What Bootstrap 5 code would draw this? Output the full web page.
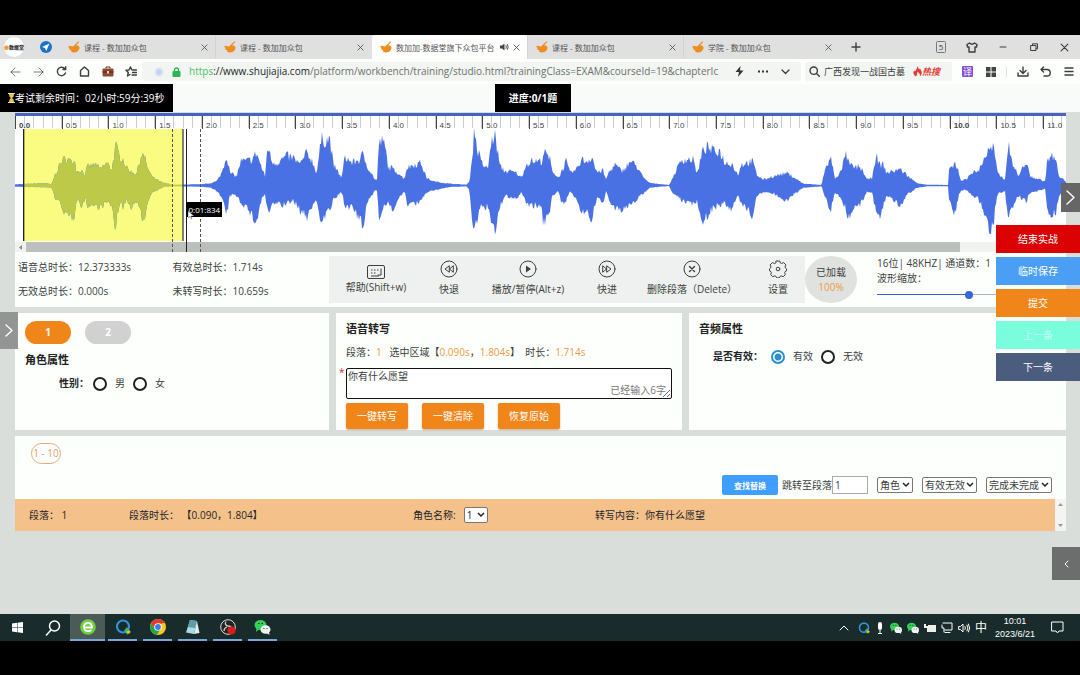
<!DOCTYPE html>
<html lang="zh-CN">
<head>
<meta charset="utf-8">
<meta name="viewport" content="width=device-width, initial-scale=1">
<title>数加加-数据堂旗下众包平台</title>
<link href="https://cdn.jsdelivr.net/npm/bootstrap@5.3.0/dist/css/bootstrap.min.css" rel="stylesheet">
<style>
:root{--ink:#3c3f3e;--orange:#f08519;--page:#dadedb;--panel:#fdfffd}
body{background:#000;color:var(--ink);font:10px/15px "Open Sans","Noto Sans CJK SC",sans-serif;min-height:100vh;padding:35px 0 34px;overflow-x:hidden}
svg{display:block;flex:none}
button,input,select,textarea{font-family:inherit;font-size:10px;line-height:15px;color:inherit}
button{border:0;background:none;padding:0}
a{color:inherit;text-decoration:none}
.ln{fill:none;stroke:currentColor;stroke-width:1.4;stroke-linecap:round;stroke-linejoin:round}
.thin{stroke-width:1}
/* browser chrome */
.tabstrip{background:#dfe0df;height:24px}
.strip-start{width:60px}
.site-logo{width:20px;height:20px;background:#fff;border-radius:50%;font-size:5px;font-weight:800;line-height:20px;color:#333;text-align:center;white-space:nowrap}
.tab-item{flex:0 1 156px;min-width:0;font-size:8px;padding:0 8px;color:#555}
.tab-item+.tab-item{box-shadow:-1px 0 0 #d2d4d2}
.tab-item.current{background:#fff;border-radius:4px 4px 0 0;box-shadow:none}
.win-btn{width:31px;height:24px}
.toolrow{background:var(--panel);height:25px}
.slot{width:23px;height:24px}
.field{background:#f2f5f2;height:19px;border-radius:2px;min-width:0}
.url{width:100%;min-width:0;white-space:nowrap;overflow:hidden;color:#6c706e}
.searchfield{width:147px;font-size:9px}
/* page */
.workspace{background:var(--page)}
.topband{background:#f8fbfa;height:28px}
.blackbox{background:#000;color:#fff;height:28px}
.progressbox{left:0;right:0;margin:0 auto;width:76px;top:0;transform:translateX(-7px)}
.stack{padding:1px 14px 0 15px;gap:6px}
.panel{background:var(--panel)}
.pad-x{padding-left:10px;padding-right:10px}
.ruler{height:13px;background:#fff}
.tick{flex:0 0 4.448%;border-left:1px solid #444;font:8px/8px "Liberation Sans",sans-serif;padding:6px 0 0 3px;color:#444;background:repeating-linear-gradient(90deg,transparent 0 calc(20% - 1px),#c9cbd0 calc(20% - 1px) 20%) 0 0/100% 12px no-repeat}
.wavebox{border-top:3px solid #4662c4}
.wave{width:100%;height:113px}
.hscroll{height:10px;background:#f0f2f0;padding:0 106px 0 11px}
.hthumb{background:#bcc0bd;height:10px}
.hleft{left:4px;top:3px}
.mark-line{top:13px;bottom:0;width:0;border-left:1px solid #222}
.mark-line.dotted{border-left-style:dashed;border-left-color:#555}
.timetip{background:#000;color:#fff;font-size:8px;line-height:15px;width:36px;height:15px;left:16.3%;top:86px;white-space:nowrap;text-align:center}
.cursor{left:2px;top:9px}
.inforow{display:grid;grid-template-columns:314fr 476fr 52px 209fr;height:55px;padding:4px 0}
.stats{display:grid;grid-template-columns:155fr 157fr;padding-left:3px}
.tools{background:#eef1ef;height:47px;display:grid;grid-template-columns:94fr 52fr 106fr 52fr 118fr 54fr}
.tools button{height:47px;min-width:0}
.loaded{background:#e0e2e0;border-radius:50%;height:47px}
.format{padding-left:20px}
.o{color:#eb9a45}
.zoomrange{appearance:none;height:9px;width:140px;background:linear-gradient(90deg,#3a62c8 93px,#aab4cc 93px) 0 4px/100% 1px no-repeat;display:block}
.zoomrange::-webkit-slider-thumb{appearance:none;width:8px;height:8px;border-radius:50%;background:#3565d8}
.cards{display:grid;grid-template-columns:minmax(0,314fr) minmax(0,346fr) minmax(0,377fr);gap:7px}
.cards>section{height:117px}
.pill{width:46px;height:23px;border-radius:12px;background:#d0d1d0;color:#fff;font-weight:700}
.pill.on{background:var(--orange)}
.btn-gap{gap:14px}
h2{font-size:11px;line-height:16px;font-weight:700;margin:0;color:#222}
.attr{margin-left:34px}
.attr-wide{margin-left:14px}
.rd{appearance:none;width:14px;height:14px;border:2px solid #222;border-radius:50%;margin:0;flex:none;background:#fff}
.rd:checked{border-color:#2a91cc;background:radial-gradient(circle,#2a91cc 0 3px,#fff 4px)}
.transcript{width:100%;height:31px;border:1px solid #111;border-radius:2px;outline:0;padding:0 1px;display:block;background:#fff;overflow:hidden}
.counter{right:6px;bottom:1px;color:#777}
.star{left:-7px;top:-3px;color:#c33}
.act{width:62px;height:26px;background:var(--orange);color:#fff;border-radius:2px;box-shadow:0 1px 2px #a86a}
.rangechip{width:30px;height:21px;border:1px solid #e5a97c;border-radius:11px;color:#dd9d6d;white-space:nowrap;line-height:19px;text-align:center}
.find{width:56px;height:20px;background:#409eff;color:#fff;border-radius:2px;font-size:8px;font-weight:700}
.jump{width:36px;height:18px;border:1px solid #aaa;padding:0 2px;background:#fff}
.filters{gap:9px;padding-right:14px}
.sel{appearance:none;height:16px;line-height:14px;border:1px solid #777;border-radius:2px;padding:0 2px;background:#fff url("data:image/svg+xml,%3Csvg xmlns='http://www.w3.org/2000/svg' viewBox='0 0 8 6'%3E%3Cpath d='M1 1l3 3 3-3' fill='none' stroke='%23222' stroke-width='1.5'/%3E%3C/svg%3E") right 2px center/8px 6px no-repeat}
.s1{width:36px}.s2{width:55px}.s3{width:66px}.s4{width:24px}
.listcard{height:63px;padding:7px 0 4px}
.segrow{background:#f5c18b;display:grid;grid-template-columns:100fr 284fr 182fr 460fr 11px;height:32px;padding-left:14px}
.vscroll{background:#f3f4f3;height:32px;padding:4px 0}
/* overlays */
.sideacts{right:0;top:141px;width:84px;gap:4px}
.sideacts button{height:28px;color:#fff;width:100%}
.edge{background:#666;color:#fff}
.edge-l{left:0;top:228px;width:18px;height:37px;background:#929593}
.edge-r{right:0;top:99px;width:19px;height:29px}
.edge-b{right:0;top:463px;width:28px;height:33px;background:#6b6e6c}
/* desktop taskbar */
.taskbar{background:#1a2b2b;height:27px;color:#fff}
.app{width:35px;height:27px;padding:0 3px}
.app span{border-bottom:2px solid #76a9d8;width:29px;height:27px}
.app.live{background:#4c5b58;padding:0}
.app.live span{width:35px}
.tray{gap:5px;padding-right:16px}
.ime{font-size:12px}
.clock{font:9px/13px "Liberation Sans",sans-serif;text-align:center;width:46px}
</style>
</head>
<body class="d-flex flex-column">
<svg width="0" height="0" class="position-absolute" aria-hidden="true"><defs>
<symbol id="hand" viewBox="0 0 12 12"><path fill="#f08c1c" d="M11.500.8 8 4.300Q10.500 4 11.500 6 11.500 9.500 8.500 11 5.500 12.200 3 10.500L3.200 9.200 1 8.300 1.500 7 .2 5.800 1 4.800 5 5.500 10.200.5z"/></symbol>
<symbol id="close" viewBox="0 0 8 8"><path class="ln thin" d="M1 1l6 6M7 1 1 7"/></symbol>
<symbol id="wechat" viewBox="0 0 16 16"><ellipse cx="6" cy="6" rx="6" ry="5" fill="#34d058"/><path d="M2 9 1.500 13 5 10z" fill="#34d058"/><ellipse cx="11" cy="10.500" rx="5" ry="4.300" fill="#eef4ef"/><path d="m12 14 3 2-.5-3z" fill="#eef4ef"/><path d="M3.500 4.500h1.500M7 4.500h1.500M9 9.500h1M12 9.500h1" stroke="#1a2b2b"/></symbol>
<symbol id="qbird" viewBox="0 0 16 16"><circle cx="8" cy="7.500" r="6" fill="none" stroke="#3092df" stroke-width="2.200"/><path d="M9 11.500 12 8l2 3 2 1.500-3 2-1 1.500-1-2.500z" fill="#35b568"/><path d="M11 13l3-2 1.500 2.500-2 1.500z" fill="#f2b431"/></symbol>
</defs></svg>

<header class="tabstrip d-flex">
  <div class="strip-start d-flex align-items-center flex-shrink-0 ps-1">
    <div class="site-logo"><span class="o">●</span>数据堂</div>
    <svg class="ms-3" width="12" height="12" viewBox="0 0 12 12"><circle cx="6" cy="6" r="6" fill="#1d72c8"/><path d="M9.500 2.500 2 6l3 1 1.200 3z" fill="#fff"/></svg>
  </div>
  <a href="#" class="tab-item d-flex align-items-center"><svg width="12" height="12"><use href="#hand"/></svg><span class="ms-1 flex-grow-1 text-nowrap">课程 - 数加加众包</span><svg width="7" height="7"><use href="#close"/></svg></a>
  <a href="#" class="tab-item d-flex align-items-center"><svg width="12" height="12"><use href="#hand"/></svg><span class="ms-1 flex-grow-1 text-nowrap">课程 - 数加加众包</span><svg width="7" height="7"><use href="#close"/></svg></a>
  <a href="#" class="tab-item current d-flex align-items-center"><svg width="12" height="12"><use href="#hand"/></svg><span class="ms-1 flex-grow-1 text-nowrap">数加加-数据堂旗下众包平台</span><svg class="mx-1" width="9" height="8" viewBox="0 0 9 8"><path d="M0 2.500h2L4.500.5v7L2 5.500H0z" fill="#444"/><path class="ln thin" d="M6 2.500q1 1.500 0 3M7.500 1.500q1.500 2.500 0 5"/></svg><svg width="7" height="7"><use href="#close"/></svg></a>
  <a href="#" class="tab-item d-flex align-items-center"><svg width="12" height="12"><use href="#hand"/></svg><span class="ms-1 flex-grow-1 text-nowrap">课程 - 数加加众包</span><svg width="7" height="7"><use href="#close"/></svg></a>
  <a href="#" class="tab-item d-flex align-items-center"><svg width="12" height="12"><use href="#hand"/></svg><span class="ms-1 flex-grow-1 text-nowrap">学院 - 数加加众包</span><svg width="7" height="7"><use href="#close"/></svg></a>
  <button class="win-btn d-flex align-items-center justify-content-center" aria-label="新建标签"><svg width="10" height="10" viewBox="0 0 10 10"><path class="ln" d="M5 1v8M1 5h8"/></svg></button>
  <div class="d-flex ms-auto align-items-center">
    <button class="win-btn d-flex align-items-center justify-content-center"><svg width="10" height="12" viewBox="0 0 10 12"><rect x=".5" y=".5" width="9" height="11" rx="1" fill="none" stroke="#777"/><text x="5" y="9" font-size="8" text-anchor="middle" fill="#444">5</text></svg></button>
    <button class="win-btn d-flex align-items-center justify-content-center" aria-label="皮肤"><svg width="12" height="11" viewBox="0 0 12 11"><path class="ln" d="M3.500 1 1 2.500 1.500 5H3v5h6V5h1.500L11 2.500 8.500 1Q6 3.500 3.500 1z"/></svg></button>
    <button class="win-btn d-flex align-items-center justify-content-center" aria-label="最小化"><svg width="8" height="8" viewBox="0 0 8 8"><path class="ln thin" d="M1 4h6"/></svg></button>
    <button class="win-btn d-flex align-items-center justify-content-center" aria-label="还原"><svg width="8" height="8" viewBox="0 0 8 8"><path class="ln thin" d="M1 2.500h5v5H1zM2.500 2.500V.8h5v5H6"/></svg></button>
    <button class="win-btn d-flex align-items-center justify-content-center" aria-label="关闭"><svg width="9" height="9"><use href="#close"/></svg></button>
  </div>
</header>

<nav class="toolrow d-flex align-items-center" aria-label="浏览器工具栏">
  <div class="d-flex ps-1 flex-shrink-0">
    <button class="slot d-flex align-items-center justify-content-center text-black-50" aria-label="后退"><svg width="11" height="10" viewBox="0 0 11 10"><path class="ln thin" d="M10 5H1M5 1 1 5l4 4"/></svg></button>
    <button class="slot d-flex align-items-center justify-content-center text-black-50" aria-label="前进"><svg width="11" height="10" viewBox="0 0 11 10"><path class="ln thin" d="M1 5h9M6 1l4 4-4 4"/></svg></button>
    <button class="slot d-flex align-items-center justify-content-center" aria-label="刷新"><svg width="11" height="11" viewBox="0 0 11 11"><path class="ln" d="M9.500 7A4.200 4.200 0 1 1 9 3M9.700.8V3.500H7"/></svg></button>
    <button class="slot d-flex align-items-center justify-content-center" aria-label="主页"><svg width="11" height="11" viewBox="0 0 11 11"><path class="ln" d="M1.500 4.500 5.500 1l4 3.500V10h-8z"/></svg></button>
    <button class="slot d-flex align-items-center justify-content-center" aria-label="工具箱"><svg width="12" height="11" viewBox="0 0 12 11"><path d="M4 2.500V1h4v1.500" fill="none" stroke="#6b3322"/><rect x=".5" y="2.500" width="11" height="8" rx="1" fill="#8a4a32"/><path d="M.5 6h11" stroke="#562718"/><rect x="5" y="5" width="2" height="2.500" fill="#e8d8c0"/></svg></button>
    <button class="slot d-flex align-items-center justify-content-center" aria-label="收藏"><svg width="12" height="11" viewBox="0 0 12 11"><path class="ln" d="M7 4 5.500 1 4 4 1 4.300l2.300 2.200L2.500 10 5 8.500M8 4h3.500M7.500 6.500h4M7 9h4.500"/></svg></button>
  </div>
  <div class="field d-flex align-items-center flex-grow-1 ps-2 pe-1 me-1">
    <svg class="ms-1" width="10" height="10" viewBox="0 0 10 10"><circle cx="5" cy="5" r="4.500" fill="#dbe4f6"/><circle cx="5" cy="5" r="2.500" fill="#c3d1f2"/></svg>
    <svg class="ms-2 me-2" width="9" height="10" viewBox="0 0 9 10"><path d="M2.500 5V3a2 2 0 0 1 4 0v2" fill="none" stroke="#2fb455" stroke-width="1.400"/><rect x=".5" y="4" width="8" height="6" rx="1" fill="#2fb455"/></svg>
    <a href="#" class="url"><span style="color:#4cc26a">https</span><span class="text-dark">://www.shujiajia.com</span>/platform/workbench/training/studio.html?trainingClass=EXAM&amp;courseId=19&amp;chapterIc</a>
    <button class="slot d-flex align-items-center justify-content-center flex-shrink-0" aria-label="加速"><svg width="9" height="11" viewBox="0 0 9 11"><path d="M5.500 0 .5 6H4L3 11l5.500-6.500H5z" fill="#333"/></svg></button>
    <button class="slot d-flex align-items-center justify-content-center flex-shrink-0" aria-label="更多"><svg width="10" height="3" viewBox="0 0 10 3"><path d="M0 .5h2v2H0zM4 .5h2v2H4zM8 .5h2v2H8z" fill="#333"/></svg></button>
    <button class="slot d-flex align-items-center justify-content-center flex-shrink-0" aria-label="展开"><svg width="9" height="6" viewBox="0 0 9 6"><path class="ln" d="M1 1l3.500 3.500L8 1"/></svg></button>
  </div>
  <div class="field searchfield d-flex align-items-center flex-shrink-0 ps-1">
    <svg width="11" height="11" viewBox="0 0 11 11"><circle class="ln" cx="4.700" cy="4.700" r="3.700"/><path class="ln" d="M7.500 7.500 10.300 10.300"/></svg>
    <a href="#" class="ms-1 text-nowrap">广西发现一战国古墓</a>
    <svg class="ms-2" width="9" height="11" viewBox="0 0 9 11"><path d="M4.500 0q.5 3 2 3.500L7 2.500q3 4 1 6.500L7 10.500Q7 7 4.500 5.500 4 9 3 10.500-1 8 1 4.500L2 5.500Q4 3 4.500 0z" fill="#e33b35"/></svg>
    <a href="#" class="fw-bold fst-italic" style="color:#e33b35">热搜</a>
  </div>
  <div class="d-flex align-items-center flex-shrink-0 ms-1">
    <button class="slot d-flex align-items-center justify-content-center"><svg width="11" height="11" viewBox="0 0 11 11"><rect width="11" height="11" rx="1" fill="#8650d6"/><text x="5.500" y="9" font-size="9" text-anchor="middle" fill="#fff">译</text></svg></button>
    <button class="slot d-flex align-items-center justify-content-center" aria-label="扩展"><svg width="10" height="10" viewBox="0 0 10 10"><path d="M0 0h4.500v4.500H0zM5.500 0H10v4.500H5.500zM0 5.500h4.500V10H0zM5.500 5.500H10V10H5.500z" fill="#444"/></svg></button>
    <span class="border-start ms-1 me-1" style="height:10px"></span>
    <button class="slot d-flex align-items-center justify-content-center" aria-label="下载"><svg width="12" height="11" viewBox="0 0 12 11"><path class="ln" d="M6 1v6M3 4.500 6 7.500l3-3M1 7v3h10V7"/></svg></button>
    <button class="slot d-flex align-items-center justify-content-center" aria-label="撤销"><svg width="11" height="11" viewBox="0 0 11 11"><path class="ln" d="M3.500 1 1 3.500 3.500 6M1 3.500h6a3 3 0 0 1 0 6.500H4"/></svg></button>
    <button class="slot d-flex align-items-center justify-content-center" aria-label="菜单"><svg width="10" height="9" viewBox="0 0 10 9"><path class="ln" d="M1 1h8M1 4.500h8M1 8h8"/></svg></button>
  </div>
</nav>

<main class="workspace position-relative flex-grow-1">
  <div class="topband position-relative">
    <div class="blackbox d-inline-flex align-items-center px-2">
      <svg width="7" height="10" viewBox="0 0 7 10"><path d="M0 .5h7M0 9.500h7" stroke="#e9d9a5"/><path d="M1 1h5q0 3-2 4 2 1 2 4H1q0-3 2-4-2-1-2-4z" fill="#e8c64b"/></svg><span class="text-nowrap">考试剩余时间：02小时:59分:39秒</span>
    </div>
    <div class="blackbox progressbox position-absolute d-flex align-items-center justify-content-center fw-bold">进度:0/1题</div>
  </div>

  <div class="stack d-flex flex-column">
    <div class="panel">
      <div class="wavebox position-relative">
        <div class="ruler d-flex overflow-hidden" id="ruler"></div>
        <svg class="wave" id="wave" viewBox="0 0 3153 339" preserveAspectRatio="none" role="img" aria-label="语音波形">
          <defs><clipPath id="selClip"><rect x="26" y="0" width="478" height="339"/></clipPath></defs>
          <rect width="3153" height="339" fill="#fff"/>
          <rect x="26" width="478" height="336" fill="#f9fc80"/>
          <path id="waveBlue" fill="#4a71e3"/>
          <rect x="26" y="165" width="478" height="10" fill="#f9fc80"/>
          <path id="waveSel" fill="#bdc948" clip-path="url(#selClip)"/>
          <rect x="24" width="4" height="336" fill="#222"/><rect x="502" width="4" height="336" fill="#444"/>
        </svg>
        <div class="hscroll position-relative"><svg class="hleft position-absolute" width="3" height="5" viewBox="0 0 3 5"><path d="M3 0 0 2.500 3 5z" fill="#888"/></svg><div class="hthumb"></div></div>
        <div class="mark-line dotted position-absolute" style="left:14.900%"></div>
        <div class="mark-line position-absolute" style="left:16.300%"></div>
        <div class="mark-line dotted position-absolute" style="left:17.600%"></div>
        <div class="timetip position-absolute">0:01:834<svg class="cursor position-absolute" width="6" height="9" viewBox="0 0 6 9"><path d="M0 0v7l2-1.500L3 8l1-.5L3 5h3z" fill="#fff" stroke="#333" stroke-width=".4"/></svg></div>
      </div>
      <div class="inforow">
        <div class="stats text-nowrap">
          <div class="pt-1">语音总时长：12.373333s</div><div class="pt-1">有效总时长：1.714s</div>
          <div class="pt-1">无效总时长：0.000s</div><div class="pt-1">未转写时长：10.659s</div>
        </div>
        <div class="tools text-nowrap">
          <button class="d-flex flex-column align-items-center pt-2"><svg width="18" height="16" viewBox="0 0 18 16"><rect class="ln thin" x=".5" y="1.500" width="17" height="13" rx="1.500"/><path d="M4 6h1.500M7 6h1.500M10 6h1.500M4 9h1.500M7 9h1.500M4 12h8" stroke="currentColor"/><path class="ln thin" d="M14 5v6h-3"/></svg>帮助(Shift+w)</button>
          <button class="d-flex flex-column align-items-center pt-1"><svg class="mb-1" width="18" height="18" viewBox="0 0 18 18"><circle class="ln thin" cx="9" cy="9" r="8"/><path class="ln thin" d="M9 6 5 9l4 3zM13 6 9.500 9l3.500 3z"/></svg>快退</button>
          <button class="d-flex flex-column align-items-center pt-1"><svg class="mb-1" width="18" height="18" viewBox="0 0 18 18"><circle class="ln thin" cx="9" cy="9" r="8"/><path d="M7 5.500 12 9l-5 3.500z" fill="currentColor"/></svg>播放/暂停(Alt+z)</button>
          <button class="d-flex flex-column align-items-center pt-1"><svg class="mb-1" width="18" height="18" viewBox="0 0 18 18"><circle class="ln thin" cx="9" cy="9" r="8"/><path class="ln thin" d="M5 6 8.500 9 5 12zM9 6l4 3-4 3z"/></svg>快进</button>
          <button class="d-flex flex-column align-items-center pt-1"><svg class="mb-1" width="18" height="18" viewBox="0 0 18 18"><circle class="ln thin" cx="9" cy="9" r="8"/><path class="ln" d="M6.500 6.500l5 5M11.500 6.500l-5 5"/></svg>删除段落（Delete）</button>
          <button class="d-flex flex-column align-items-center pt-1"><svg class="mb-1" width="18" height="18" viewBox="0 0 18 18"><path class="ln thin" d="M7.300 1h3.400l.7 2 1.200.5 2-.9 2.300 2.300-.9 2 .5 1.100 1 .8v2l-1.500.9-.3 1 .6 2-2.100 2-2-.8-1.100.4-.8 1.600H7.700l-.8-1.600-1.100-.4-2 .8-2.100-2 .6-2-.3-1-1.500-.9v-2l1-.8.5-1.100-.9-2 2.300-2.300 2 .9L6.600 3z"/><circle class="ln thin" cx="9" cy="9" r="1.800"/></svg>设置</button>
        </div>
        <div class="loaded d-flex flex-column align-items-center justify-content-center">已加载<span class="o">100%</span></div>
        <div class="format text-nowrap">
          <div>16位| 48KHZ| 通道数：1</div><label for="zoomer" class="d-block">波形缩放：</label>
          <input id="zoomer" class="zoomrange mt-1" type="range" min="0" max="100" value="67">
        </div>
      </div>
    </div>

    <div class="cards">
      <section class="panel pt-2 pad-x">
        <div class="d-flex btn-gap"><button class="pill on">1</button><button class="pill">2</button></div>
        <h2 class="mt-2">角色属性</h2>
        <div class="attr d-flex align-items-center mt-2"><b class="text-dark me-1">性别：</b>
          <input class="rd" type="radio" name="sex" id="m"><label class="mx-2" for="m">男</label>
          <input class="rd" type="radio" name="sex" id="f"><label class="ms-2" for="f">女</label></div>
      </section>
      <section class="panel pt-2 pad-x">
        <h2>语音转写</h2>
        <div class="mt-2 text-nowrap">段落：<span class="o">1</span>&nbsp;&nbsp; 选中区域【<span class="o">0.090s</span>，<span class="o">1.804s</span>】&nbsp; 时长：<span class="o">1.714s</span></div>
        <div class="position-relative mt-2"><span class="star position-absolute">*</span>
          <textarea class="transcript" aria-label="转写内容">你有什么愿望</textarea><span class="counter position-absolute">已经输入6字</span></div>
        <div class="d-flex btn-gap mt-1"><button class="act">一键转写</button><button class="act">一键清除</button><button class="act">恢复原始</button></div>
      </section>
      <section class="panel pt-2 pad-x">
        <h2>音频属性</h2>
        <div class="attr-wide d-flex align-items-center mt-2 pt-1"><b class="text-dark me-1">是否有效：</b>
          <input class="rd ms-1" type="radio" name="ok" id="y" checked><label class="mx-2" for="y">有效</label>
          <input class="rd" type="radio" name="ok" id="n"><label class="ms-2" for="n">无效</label></div>
      </section>
    </div>

    <div>
      <div class="panel listcard d-flex flex-column justify-content-between">
        <button class="rangechip ms-3">1 - 10</button>
        <div class="filters d-flex align-items-center justify-content-end text-nowrap">
          <div class="d-flex align-items-center"><button class="find me-1">查找替换</button><label for="jump">跳转至段落</label><input id="jump" class="jump" value="1"></div>
          <select class="sel s1" aria-label="角色"><option>角色</option></select>
          <select class="sel s2" aria-label="有效无效"><option>有效无效</option></select>
          <select class="sel s3" aria-label="完成未完成"><option>完成未完成</option></select>
        </div>
      </div>
      <div class="segrow align-items-center text-nowrap text-dark">
        <div>段落： 1</div><div>段落时长： 【0.090，1.804】</div>
        <div class="d-flex align-items-center"><label for="rn" class="me-2">角色名称:</label><select id="rn" class="sel s4"><option>1</option></select></div>
        <div>转写内容：你有什么愿望</div>
        <div class="vscroll d-flex flex-column justify-content-between align-items-center"><svg width="5" height="3" viewBox="0 0 5 3"><path d="M0 3 2.500 0 5 3z" fill="#999"/></svg><svg width="5" height="3" viewBox="0 0 5 3"><path d="M0 0h5L2.500 3z" fill="#999"/></svg></div>
      </div>
    </div>
  </div>

  <button class="edge edge-l position-absolute d-flex align-items-center justify-content-center" aria-label="展开左栏"><svg width="8" height="13" viewBox="0 0 8 13"><path class="ln" d="M1 1l6 5.500L1 12"/></svg></button>
  <button class="edge edge-r position-absolute d-flex align-items-center justify-content-center" aria-label="下一页"><svg width="9" height="15" viewBox="0 0 9 15"><path class="ln" d="M1 1l7 6.500L1 14"/></svg></button>
  <button class="edge edge-b position-absolute d-flex align-items-center justify-content-center" aria-label="收起"><svg width="5" height="8" viewBox="0 0 5 8"><path class="ln thin" d="M4 1 1 4l3 3"/></svg></button>
  <div class="sideacts position-absolute d-flex flex-column">
    <button style="background:#da0202">结束实战</button><button style="background:#4a9ff5">临时保存</button><button style="background:#f08519">提交</button><button style="background:#79fddd;color:#c8fff0">上一条</button><button style="background:#4b5d7f">下一条</button>
  </div>
</main>

<footer class="taskbar d-flex align-items-center">
  <button class="app d-flex align-items-center justify-content-center" aria-label="开始"><svg width="11" height="11" viewBox="0 0 11 11"><path d="M0 1.500 5 .8v4.500H0zM5.500.7 11 0v5.300H5.500zM0 5.800h5v4.500l-5-.7zM5.500 5.800H11V11l-5.500-.7z" fill="#fff"/></svg></button>
  <button class="app d-flex align-items-center justify-content-center" aria-label="搜索"><svg width="16" height="16" viewBox="0 0 16 16"><circle cx="9.500" cy="6" r="5" fill="none" stroke="#fff" stroke-width="1.500"/><path d="M6 10 1 15.500" stroke="#fff" stroke-width="1.500"/></svg></button>
  <button class="app live"><span class="d-flex align-items-center justify-content-center"><svg width="16" height="16" viewBox="0 0 16 16"><circle cx="8" cy="8" r="7.800" fill="#6fd03f"/><path d="M3.500 8.500H12Q12 4 8 4T4 8t4 4.200q2 0 3.500-1.200" fill="none" stroke="#fff" stroke-width="1.800"/></svg></span></button>
  <button class="app"><span class="d-flex align-items-center justify-content-center"><svg width="16" height="16"><use href="#qbird"/></svg></span></button>
  <button class="app"><span class="d-flex align-items-center justify-content-center"><svg width="16" height="16" viewBox="0 0 16 16"><circle cx="8" cy="8" r="8" fill="#f9c921"/><path d="M8 8H4L1.100 4A8 8 0 0 0 7 16l3.500-6z" fill="#2da24c"/><path d="M1.100 4A8 8 0 0 1 14.900 4L8 5 4.500 9z" fill="#e3382c"/><circle cx="8" cy="8" r="3.800" fill="#fff"/><circle cx="8" cy="8" r="2.900" fill="#3b7de8"/></svg></span></button>
  <button class="app"><span class="d-flex align-items-center justify-content-center"><svg width="16" height="16" viewBox="0 0 16 16"><path d="M5 1 12 2 9 15 1 13.500z" fill="#a9dbe2"/><path d="m5 1 7 1-2 7-7-1z" fill="#5f9aa8"/><path d="m12 2 2.500 12L9 15z" fill="#dceeee"/></svg></span></button>
  <button class="app"><span class="d-flex align-items-center justify-content-center"><svg width="16" height="16" viewBox="0 0 16 16"><circle cx="8" cy="8" r="7.300" fill="#222" stroke="#ddd"/><path d="M8 7q-4-1-2-4.500M8 7q4 0 4 4M7 8q-3 1-3 4" fill="none" stroke="#ccc" stroke-width="1.300"/><circle cx="11.500" cy="11.500" r="4" fill="#dc1c1c"/></svg></span></button>
  <button class="app"><span class="d-flex align-items-center justify-content-center"><svg width="17" height="16"><use href="#wechat"/></svg></span></button>
  <div class="tray d-flex align-items-center ms-auto">
    <svg width="10" height="6" viewBox="0 0 10 6"><path class="ln thin" d="M1 5l4-4 4 4"/></svg>
    <svg class="ms-1" width="12" height="12"><use href="#qbird"/></svg>
    <svg width="10" height="12" viewBox="0 0 10 12"><rect x="3" width="4" height="8" rx="2" fill="#fff"/><path d="M5 8v4M3 11.500h4" stroke="#fff"/></svg>
    <svg width="12" height="12"><use href="#wechat"/></svg><svg width="12" height="12"><use href="#wechat"/></svg>
    <svg width="12" height="10" viewBox="0 0 12 10"><path d="M0 1h2v2h2V2h8v7H3V5H0z" fill="#eee"/></svg>
    <svg width="12" height="11" viewBox="0 0 12 11"><path class="ln thin" d="M2 1h9v7H4M4 10.500h5M1 3v3h2v4"/></svg>
    <svg width="12" height="10" viewBox="0 0 12 10"><path class="ln thin" d="M1 3.500h1.500L5 1v8L2.500 6.500H1zM7 3.500q1 1.500 0 3M9 2q2 3 0 6M10.500 1q2.500 4 0 8"/></svg>
    <span class="ime">中</span>
    <div class="clock">10:01<br>2023/6/21</div>
    <svg class="ms-2" width="13" height="13" viewBox="0 0 13 13"><path class="ln thin" d="M1 1h11v9H8l-1.500 2L5 10H1z"/></svg>
  </div>
</footer>

<script src="https://cdn.jsdelivr.net/npm/bootstrap@5.3.0/dist/js/bootstrap.bundle.min.js"></script>
<script>
// Time ruler: one cell for each half second
const ruler = document.getElementById('ruler');
for (let i = 0; i < 23; i++) {
  const cell = document.createElement('div');
  cell.className = 'tick' + (i % 20 === 0 ? ' fw-bold' : '');
  cell.textContent = (i / 2).toFixed(1);
  ruler.append(cell);
}
// Envelope: x, upper edge, lower edge, in three stretches with their own x origin
const stretches = [
 [-45, '45,224,229 135,221,231 155,224,232 165,195,262 185,155,285 200,145,320 215,160,318 222,142,318 230,185,260 245,182,290 255,195,262 262,172,285 290,165,285 300,180,292 320,160,275 335,180,285 347,110,352 357,135,285 370,150,290 380,175,265 390,185,290 410,192,275 425,130,320 435,150,315 445,180,270 455,200,245 470,210,240 490,220,230 520,225,228 600,224,229 630,221,232 650,215,240 665,190,262 680,135,315 690,190,255 710,200,255 722,155,275 740,155,290 755,150,315 770,130,335 785,175,265 795,200,250 803,105,310 815,155,290 830,160,275 845,150,285 860,140,280 880,145,270 900,165,300 920,130,320 935,150,290 950,190,270 958,130,310 965,90,330 990,90,295 1000,165,270 1025,205,245 1035,140,285 1055,160,290'],
 [1035, '0,150,330 8,135,350 25,175,270 45,210,240 53,210,240 55,100,320 65,95,300 75,110,285 85,175,275 95,175,300 115,190,270 130,205,245 134,205,245 140,175,280 160,165,280 183,160,275 200,205,245 220,215,240 270,222,230 320,225,228 328,215,240 335,160,310 343,62,365 352,120,330 365,160,285 383,180,290 392,110,330 403,70,370 412,120,330 420,170,290 435,185,255 450,185,260 470,190,265 485,205,245 495,170,270 510,155,285 545,155,285 550,130,350 560,135,310 570,150,300 575,180,255 595,205,245 605,185,280 618,155,270 630,190,245 650,180,265 663,150,310 680,155,300 697,140,330 705,175,280 715,190,260 728,180,285 738,210,240 745,190,265 765,165,290 785,185,300 813,155,285 835,175,260 850,205,250 870,220,232 928,226,227 935,210,245 965,150,270 1000,150,280 1012,195,270 1020,155,310 1032,115,335 1045,115,310 1060,125,290'],
 [2115, '0,125,285 15,160,280 35,160,305 50,190,255 55,195,260 62,165,275 98,155,315 110,195,260 130,210,245 160,200,250 200,190,270 225,205,250 250,222,232 305,226,228 310,195,245 320,170,270 332,145,300 345,205,245 365,185,265 375,130,290 388,165,325 405,175,285 415,170,290 430,185,270 440,210,245 458,205,245 460,165,270 471,145,300 478,165,320 490,165,285 500,190,255 540,178,285 565,200,250 590,220,233 620,225,228 684,226,228 686,180,260 700,170,300 705,160,310 715,180,260 722,212,240 740,210,240 750,190,250 775,185,265 790,150,300 808,120,350 820,115,355 825,140,300 832,190,250 855,210,245 860,140,300 867,115,320 880,165,290 895,200,255 918,155,275 930,200,250 975,215,235 982,150,300 995,140,315 1010,155,300 1015,200,260 1038,215,240']
];
const pts = stretches.flatMap(([dx, s]) => s.split(' ').map(t => {
  const [x, a, b] = t.split(',').map(Number);
  return [x + dx, 227 - a, b - 227];
}));
const mid = 170, up = [], down = [];
let seed = 7;
const rnd = () => (seed = (seed * 16807) % 2147483647) / 2147483647;
for (let x = 0, k = 0; x <= 3153; x += 3) {
  while (k < pts.length - 2 && pts[k + 1][0] < x) k++;
  const [p, q] = [pts[k], pts[k + 1]];
  const f = Math.min(1, Math.max(0, (x - p[0]) / (q[0] - p[0])));
  const edge = i => (p[i] + (q[i] - p[i]) * f) * (0.82 + rnd() * 0.36) + 1;
  up.push(`${x} ${(mid - edge(1)).toFixed(1)}`);
  down.unshift(`${x} ${(mid + edge(2)).toFixed(1)}`);
}
const d = 'M' + up.concat(down).join('L') + 'Z';
document.getElementById('waveBlue').setAttribute('d', d);
document.getElementById('waveSel').setAttribute('d', d);
</script>
</body>
</html>
